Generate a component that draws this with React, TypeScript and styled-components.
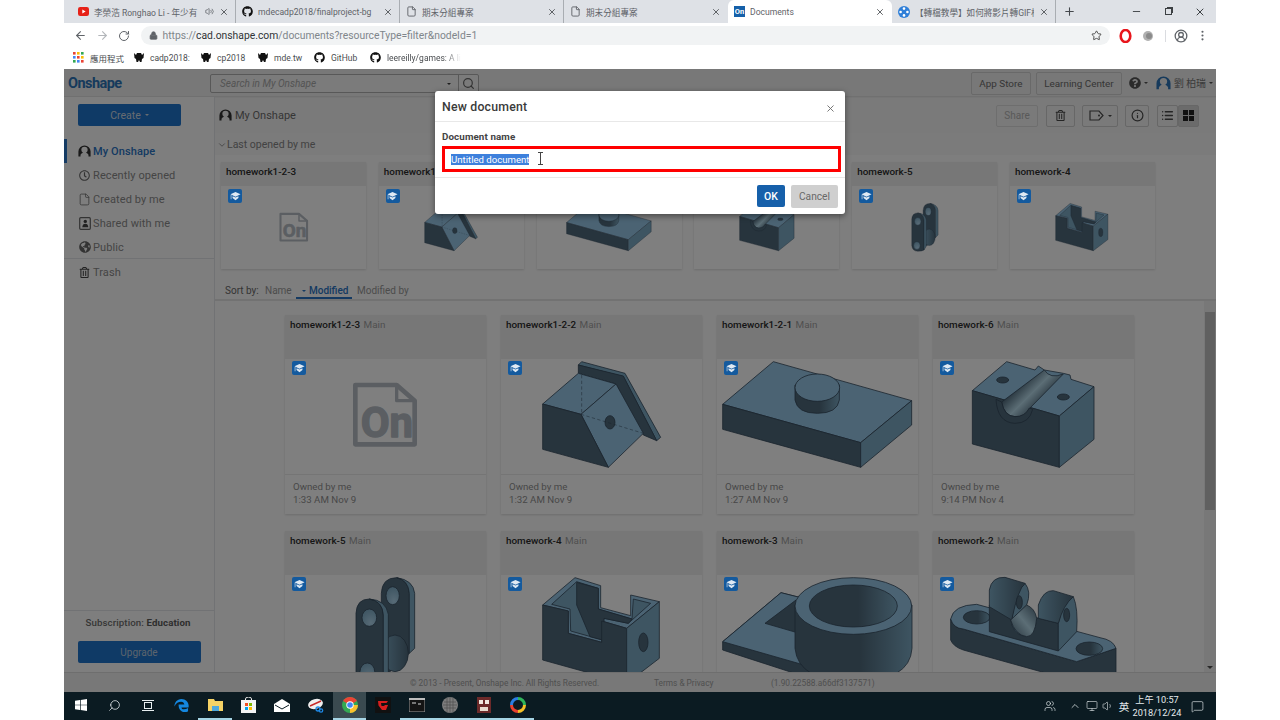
import React from "react";
import styled, { createGlobalStyle } from "styled-components";
import {
  ArrowLeft, ArrowRight, RotateCw, Lock, Star, EllipsisVertical, Plus, Minus, X, File, Search,
  Volume2, ChevronDown, List, CircleUserRound, Info, ChevronUp, Volume1, MessageSquare, Monitor, Users,
} from "lucide-react";
import { FaGithub, FaRegClock, FaGlobeAmericas, FaRegTrashAlt, FaQuestionCircle } from "react-icons/fa";

const FONT = `Roboto, "Noto Sans CJK TC", sans-serif`;
const TOP = "#96c6e6", DARK = "#4e687a", SIDE = "#7caac4", EDGE = "#34485a";

const Global = createGlobalStyle`
  html, body { margin: 0; padding: 0; background: #fff; }
  body { font-family: ${FONT}; }
  * { box-sizing: border-box; }
`;

const Root = styled.div`width: 1280px; height: 720px; display: flex; justify-content: center; background: #fff; overflow: hidden;`;
const Frame = styled.div`width: 1152px; height: 720px; display: flex; flex-direction: column;`;

/* browser chrome */
const TabStrip = styled.div`height: 23px; background: #dee1e6; display: flex; padding-left: 8px; align-items: stretch; flex: none;`;
const Tab = styled.div<{ $active?: boolean; $sep?: boolean }>`
  width: 164px; display: flex; align-items: center; gap: 5px; padding: 0 6px 0 6px; position: relative;
  background: ${(p) => (p.$active ? "#fff" : "transparent")};
  border-radius: ${(p) => (p.$active ? "6px 6px 0 0" : "0")};
  border-right: 1px solid ${(p) => (p.$sep ? "#a9adb2" : "transparent")};
  background-clip: ${(p) => (p.$sep ? "padding-box" : "border-box")};
  color: #5f6368; font-size: 8.6px;
`;
const TabTitle = styled.span`flex: 1; white-space: nowrap; overflow: hidden;`;
const FavSquare = styled.span`width: 11px; height: 11px; background: #1560a9; color: #fff; font-size: 7.5px; font-weight: 700; display: flex; align-items: center; justify-content: center; flex: none;`;
const NewTab = styled.div`width: 26px; display: flex; align-items: center; justify-content: center; color: #44484c;`;
const WindowButtons = styled.div`margin-left: auto; display: flex; align-items: center; color: #3c4043;`;
const WindowButton = styled.div`width: 32px; display: flex; justify-content: center;`;
const RestoreIcon = styled.span`width: 7px; height: 7px; border: 1px solid #3c4043; box-shadow: 1.5px -1.5px 0 -0.5px #3c4043;`;

const Toolbar = styled.div`height: 23px; background: #fff; display: flex; align-items: center; padding: 2px 0 0 6px; color: #5f6368; flex: none;`;
const NavIcon = styled.div<{ $off?: boolean }>`width: 21.5px; display: flex; justify-content: center; color: ${(p) => (p.$off ? "#b3b6ba" : "#5f6368")};`;
const Address = styled.div`margin-left: 6px; width: 969px; height: 19px; border-radius: 10px; background: #f1f3f4; display: flex; align-items: center; padding-left: 8px; color: #5f6368;`;
const Url = styled.span`font-size: 10.35px; color: #80868b; margin-left: 5px; white-space: nowrap; b { font-weight: 400; color: #303336; }`;
const StarWrap = styled.span`margin-left: auto; margin-right: 8px; display: flex;`;
const Extensions = styled.div`flex: 1; display: flex; align-items: center; position: relative;`;
const ExtSlot = styled.span<{ $w: number }>`width: ${(p) => p.$w}px; display: flex; justify-content: center;`;
const ExtDivider = styled.span`width: 1px; height: 12px; background: #dadce0; margin: 0 8px 0 11px;`;

const Bookmarks = styled.div`height: 23px; background: #fff; display: flex; align-items: center; padding-left: 9px; flex: none; font-size: 8.5px; color: #4a4d50;`;
const Bookmark = styled.div<{ $w: number }>`width: ${(p) => p.$w}px; display: flex; align-items: center; gap: 6px; white-space: nowrap; overflow: hidden;`;
const Fade = styled.span`-webkit-mask-image: linear-gradient(to right, #000 78%, transparent);`;

/* app */
const App_ = styled.div`flex: 1; min-height: 0; position: relative; display: flex; flex-direction: column; background: #fdfdfd; color: #747474;`;
const TopBar = styled.div`height: 28px; flex: none; background: #f0f0f0; border-bottom: 1px solid #e0e0e0; display: flex; align-items: center; padding: 1px 3px 0 4px;`;
const Logo = styled.div`width: 142px; color: #2d74b8; font-weight: 700; font-size: 14.5px; letter-spacing: -0.55px;`;
const SearchBox = styled.div`width: 269px; height: 19px; border: 1px solid #b0b0b0; border-radius: 2px; background: #f6f6f6; display: flex; align-items: center; font-size: 10px; color: #a8a8a8; font-style: italic; padding-left: 9px; margin-top: 1px;`;
const SearchMagnifier = styled.span`width: 20px; height: 100%; border-left: 1px solid #b0b0b0; display: flex; align-items: center; justify-content: center; color: #666; margin-left: 7px;`;
const Caret = styled.span<{ $color?: string; $size?: number }>`
  display: inline-block; width: 0; height: 0; flex: none;
  border-left: ${(p) => p.$size ?? 2.5}px solid transparent;
  border-right: ${(p) => p.$size ?? 2.5}px solid transparent;
  border-top: ${(p) => p.$size ?? 2.5}px solid ${(p) => p.$color ?? "currentColor"};
`;
const SearchSpacer = styled.span`flex: 1;`;
const TopRight = styled.div`margin-left: auto; display: flex; align-items: center; font-size: 9.9px; color: #6c6c6c;`;
const OutlineButton = styled.div<{ $w: number; $mr?: number }>`
  width: ${(p) => p.$w}px; height: 23px; margin-right: ${(p) => p.$mr ?? 0}px; border: 1px solid #d2d2d2; border-radius: 2px;
  display: flex; align-items: center; justify-content: center; gap: 5px; flex: none;
`;
const HelpSlot = styled.span`display: flex; align-items: center; gap: 3px; margin: 0 8px 0 7px; color: #555;`;
const UserName = styled.span`margin: 0 3px 0 3px; color: #777;`;

const Body = styled.div`flex: 1; min-height: 0; display: flex;`;
const Sidebar = styled.div`width: 151px; flex: none; background: #fdfdfd; border-right: 1px solid #e2e4e8; display: flex; flex-direction: column;`;
const Create = styled.div`margin: 7px 0 0 14px; width: 103px; height: 22px; background: #1e74cc; border-radius: 2px; color: #cfd8e2; font-size: 10.5px; display: flex; align-items: center; justify-content: center; gap: 4px; flex: none;`;
const Nav = styled.div`margin-top: 13px; display: flex; flex-direction: column;`;
const NavItem = styled.div<{ $active?: boolean; $h?: number }>`
  height: ${(p) => p.$h ?? 24}px; display: flex; align-items: center; gap: 2px; padding-left: ${(p) => (p.$active ? 11 : 14)}px; font-size: 11px; letter-spacing: 0.1px;
  border-left: ${(p) => (p.$active ? "3px solid #2a76c8" : "none")};
  color: ${(p) => (p.$active ? "#2a74c4" : "#8a8a8a")}; font-weight: ${(p) => (p.$active ? 500 : 400)};
`;
const NavIconBox = styled.span<{ $color?: string }>`width: 13px; display: flex; justify-content: center; color: ${(p) => p.$color ?? "#666"}; flex: none;`;
const NavDivider = styled.div`height: 1px; background: #e2e4e8; margin: -1px 0 1px;`;
const SideBottom = styled.div`margin-top: auto; border-top: 1px solid #e2e4e8; height: 62px; padding-top: 5px; display: flex; flex-direction: column; align-items: center;`;
const SubText = styled.div`font-size: 9.7px; font-weight: 500; color: #6e6e6e; height: 14px; letter-spacing: 0.1px; line-height: 14px; margin-left: -2px; b { font-weight: 700; color: #5c5c5c; }`;
const Upgrade = styled.div`margin-top: 11px; width: 123px; height: 22px; background: #1e74cc; border-radius: 2px; display: flex; align-items: center; justify-content: center; font-size: 10px; color: #b8c8da;`;

const Main = styled.div`flex: 1; min-width: 0; display: flex; flex-direction: column;`;
const MainHead = styled.div`height: 36px; flex: none; display: flex; align-items: center; padding: 0 17px 0 4px; background: #f4f4f4; font-size: 11px; border-top: 1px solid #ececec;`;
const HeadTitle = styled.span`display: flex; align-items: center; gap: 3px; color: #6c6c6c; margin-right: auto;`;
const ActionButton = styled.div<{ $w: number; $ml?: number; $light?: boolean; $sel?: boolean }>`
  width: ${(p) => p.$w}px; height: 22px; margin-left: ${(p) => p.$ml ?? 0}px; border: 1px solid ${(p) => (p.$light ? "#dcdcdc" : "#cecece")}; border-radius: 2px; font-size: 10px;
  display: flex; align-items: center; justify-content: center; gap: 4px; color: ${(p) => (p.$light ? "#b2b2b2" : "#4a4a4a")};
  background: ${(p) => (p.$sel ? "#d6d6d6" : "transparent")};
`;
const SectionHead = styled.div`height: 22px; flex: none; background: #f6f6f6; display: flex; align-items: center; padding: 1px 0 0 2px; font-size: 10.5px; color: #858585;`;
const RecentRow = styled.div`height: 127px; flex: none; display: flex; gap: 12.8px; padding: 7px 0 0 6px; background: #fcfcfc;`;
const SmallCard = styled.div`width: 145px; height: 107px; background: #fff; box-shadow: 0 1px 2px rgba(0,0,0,.14); display: flex; flex-direction: column;`;
const SmallHead = styled.div`height: 24px; background: #efefef; padding: 4px 0 0 5px; font-size: 9.9px; font-weight: 500; color: #2c2c2c; flex: none;`;
const ModelArea = styled.div`flex: 1; position: relative; display: flex; align-items: center; justify-content: center; min-height: 0;`;
const Badge = styled.span<{ $top: number }>`
  position: absolute; left: 7px; top: ${(p) => p.$top}px; width: 14px; height: 14px; background: #145a9e; border-radius: 2px;
  display: flex; align-items: center; justify-content: center; z-index: 3;
`;
const SortRow = styled.div`height: 19px; flex: none; display: flex; align-items: flex-end; padding-left: 10px; font-size: 10px; color: #8a8a8a; border-bottom: 2px solid #e4e4e4; background: #fcfcfc;`;
const SortLabel = styled.span<{ $w?: number; $strong?: boolean }>`width: ${(p) => p.$w ?? 0}px; height: 14px; white-space: nowrap; color: ${(p) => (p.$strong ? "#6a6a6a" : "#999")}; flex: none;`;
const SortActive = styled.span`width: 56px; height: 15px; color: #2a74c4; font-weight: 500; border-bottom: 2px solid #2a74c4; display: flex; align-items: center; gap: 3px; padding: 1px 0 1px 6px; margin-right: 5px; flex: none;`;

const ScrollArea = styled.div`flex: 1; min-height: 0; display: flex; overflow: hidden; background: #fcfcfc;`;
const GridWrap = styled.div`flex: 1; min-width: 0; display: flex; justify-content: center; padding-top: 14px;`;
const Grid = styled.div`display: grid; grid-template-columns: repeat(4, 201px); gap: 17px 15px; align-content: start;`;
const Card = styled.div`height: 199px; background: #fff; box-shadow: 0 1px 2px rgba(0,0,0,.14); display: flex; flex-direction: column;`;
const CardHead = styled.div`height: 44px; background: #efefef; padding: 4px 5px; font-size: 9.9px; font-weight: 500; color: #2c2c2c; white-space: nowrap; flex: none; span { font-weight: 400; color: #a0a0a0; margin-left: 1px; }`;
const CardFoot = styled.div`height: 40px; flex: none; border-top: 1px solid #eaeaea; padding: 5px 8px; font-size: 9.7px; line-height: 13px; color: #909090;`;
const Scrollbar = styled.div`width: 12px; flex: none; background: #f1f1f1; display: flex; flex-direction: column; align-items: center; padding-top: 11px; padding-bottom: 3px;`;
const Thumb = styled.div`width: 10px; height: 198px; background: #c1c1c1;`;
const ScrollEnd = styled.span`margin-top: auto; color: #505050; display: flex;`;

const Footer = styled.div`height: 20px; flex: none; background: #f0f0f0; border-top: 1px solid #dcdcdc; font-size: 8.3px; color: #a0a0a0; display: flex; align-items: center; padding-left: 346px;`;
const FootText = styled.span<{ $w: number }>`width: ${(p) => p.$w}px; white-space: nowrap; flex: none;`;

const Overlay = styled.div`position: absolute; inset: 0; background: rgba(0,0,0,.5); z-index: 2;`;
const Modal = styled.div`
  position: absolute; left: 371px; top: 22px; width: 410px; height: 123px; background: #fff; border-radius: 3px; z-index: 4;
  box-shadow: 0 2px 6px rgba(0,0,0,.45); display: flex; flex-direction: column; color: #333;
`;
const ModalHead = styled.div`height: 31px; flex: none; border-bottom: 1px solid #e8e8e8; display: flex; align-items: center; justify-content: space-between; padding: 1px 9px 0 7px; font-size: 12.3px; font-weight: 500; color: #3a3a3a; letter-spacing: 0.2px;`;
const CloseX = styled.span`display: flex; color: #6c6c6c; margin-top: 4px;`;
const ModalBody = styled.div`height: 56px; flex: none; padding: 8px 5px 0 7px; border-bottom: 1px solid #e8e8e8;`;
const FieldLabel = styled.div`font-size: 9.8px; font-weight: 700; color: #444; height: 16px; line-height: 14px; letter-spacing: 0.1px;`;
const NameField = styled.div`width: 399px; height: 26px; border: 3px solid #f00; display: flex; align-items: center; padding-left: 6px; position: relative;`;
const Selected = styled.span`background: #3d80dc; color: #fff; font-size: 9.6px; height: 11px; line-height: 11px; white-space: nowrap;`;
const IBeam = styled.svg`position: absolute; left: 92px; top: 3px;`;
const ModalFoot = styled.div`flex: 1; display: flex; justify-content: flex-end; align-items: center; gap: 6px; padding-right: 7px;`;
const OkButton = styled.div`width: 28px; height: 22px; background: #1660aa; border-radius: 2px; color: #fff; font-size: 10.5px; font-weight: 500; display: flex; align-items: center; justify-content: center;`;
const CancelButton = styled.div`width: 47px; height: 23px; background: #cfcfcf; border-radius: 2px; color: #686868; font-size: 10.2px; display: flex; align-items: center; justify-content: center;`;

/* taskbar */
const Taskbar = styled.div`height: 28px; flex: none; background: #0b1b22; display: flex; align-items: stretch; color: #e8eef0;`;
const TaskButton = styled.div<{ $running?: boolean; $focus?: boolean }>`
  width: 33.6px; display: flex; align-items: center; justify-content: center; flex: none;
  background: ${(p) => (p.$focus ? "#3a4a50" : "transparent")};
  border-bottom: 2px solid ${(p) => (p.$running ? "#a5d4e4" : "transparent")};
`;
const Tray = styled.div`margin-left: auto; display: flex; align-items: center; color: #e6ecee; padding-right: 6px;`;
const TraySlot = styled.span<{ $w: number }>`width: ${(p) => p.$w}px; display: flex; justify-content: center; align-items: center; font-size: 10.5px;`;
const Clock = styled.div`width: 50px; display: flex; flex-direction: column; align-items: center; font-size: 9.2px; line-height: 13px; margin-right: 2px;`;

/* icons */
const Arch = ({ size = 14, color = "#3a3a3a" }: { size?: number; color?: string }) => (
  <svg width={size} height={size} viewBox="0 0 16 16"><path d="M0.5 14 V8 a7.5 7.5 0 0 1 15 0 v6 h-2.6 v-2 q-1-2-3-2.6 q2-1.4 2-3.4 a3.9 3.9 0 0 0-7.8 0 q0 2 2 3.4 q-2 .6-3 2.6 v2z" fill={color} /></svg>
);
const Cap = () => (
  <svg width="11" height="11" viewBox="0 0 12 12"><path d="M6 1 L11.5 3.6 L6 6.2 L.5 3.6Z M2.8 5.6 L6 7.2 L9.2 5.6 V7.6 L6 10 L2.8 7.6Z M.8 4.4 h.7 V9 h-.7Z" fill="#dfe9f3" /></svg>
);
const TagIcon = () => (
  <svg width="15" height="11" viewBox="0 0 15 11" fill="none" stroke="#4a4a4a" strokeWidth="1.2"><path d="M1 1 H10 L14 5.5 L10 10 H1Z" /><circle cx="10" cy="5.5" r="1" fill="#4a4a4a" stroke="none" /></svg>
);
const BearIcon = () => (
  <svg width="10" height="11" viewBox="0 0 10 11"><path d="M0 1 L2 3 L3 1 L7 1 L8 3 L10 1 L9.5 6 L8 7 L7.5 10 L6 10 L5 8 L4 10 L2.5 10 L2 7 L.5 6Z" fill="#111" /></svg>
);
const AppsGrid = () => (
  <svg width="11" height="11" viewBox="0 0 11 11">
    {["#ea4335","#fbbc05","#34a853","#4285f4","#ea4335","#fbbc05","#34a853","#4285f4","#ea4335"].map((c, i) => (
      <rect key={i} x={(i % 3) * 4} y={Math.floor(i / 3) * 4} width="2.6" height="2.6" fill={c} />
    ))}
  </svg>
);
const Youtube = () => (
  <svg width="11" height="9" viewBox="0 0 11 9" style={{ flex: "none" }}><rect width="11" height="9" rx="2.2" fill="#e62117" /><path d="M4.3 2.4 L7.6 4.5 L4.3 6.6Z" fill="#fff" /></svg>
);
const Reel = () => (
  <svg width="12" height="12" viewBox="0 0 12 12" style={{ flex: "none" }}>
    <circle cx="6" cy="6" r="6" fill="#2f7fd8" />
    {[[6, 2.6], [6, 9.4], [2.6, 6], [9.4, 6]].map(([x, y], i) => <circle key={i} cx={x} cy={y} r="1.3" fill="#fff" />)}
  </svg>
);
const SharedDoc = () => (
  <svg width="12" height="13" viewBox="0 0 12 13"><rect x=".7" y=".7" width="10.6" height="11.6" rx="1" fill="none" stroke="#666" strokeWidth="1.2" /><circle cx="6.3" cy="4.4" r="1.7" fill="#444" /><path d="M3.3 10.2 q.3-3.4 3-3.4 t3 3.4z" fill="#444" /></svg>
);

type ModelKey = "doc" | "wedge" | "plate" | "block" | "clevis" | "bracket" | "ring" | "yoke";
const Grads = () => (
  <defs>
    <linearGradient id="cyl" x1="0" x2="1" y1="0" y2="0"><stop offset="0" stopColor={DARK} /><stop offset=".55" stopColor={DARK} /><stop offset="1" stopColor={SIDE} /></linearGradient>
    <linearGradient id="lug" x1="0" x2="1" y1="0" y2="0"><stop offset="0" stopColor={SIDE} /><stop offset="1" stopColor={DARK} /></linearGradient>
    <linearGradient id="grv" x1="0" x2="1" y1="1" y2="0"><stop offset="0" stopColor={DARK} /><stop offset=".5" stopColor="#b8dcec" /><stop offset="1" stopColor={DARK} /></linearGradient>
    <linearGradient id="grvb" gradientUnits="userSpaceOnUse" x1="925" y1="225" x2="990" y2="290"><stop offset="0" stopColor={DARK} /><stop offset=".5" stopColor="#b8dcec" /><stop offset="1" stopColor={DARK} /></linearGradient>
    <radialGradient id="holeg" cx=".6" cy=".8" r=".8"><stop offset="0" stopColor="#b0d6ee" /><stop offset="1" stopColor={SIDE} /></radialGradient>
  </defs>
);
const MODELS: Record<ModelKey, { vb: string; art: React.ReactNode }> = {
  doc: {
    vb: "15 147 603 345",
    art: (
      <g fill="none" stroke="#b6bdc4" strokeWidth="14" strokeLinejoin="round">
        <path d="M226 225 H350 L404 272 V403 H226Z" />
        <path d="M350 225 V272 H404" strokeWidth="10" />
        <text x="242" y="380" fontFamily="Roboto, sans-serif" fontWeight="700" fontSize="126" fill="#b6bdc4" stroke="#b6bdc4" strokeWidth="4">On</text>
      </g>
    ),
  },
  wedge: {
    vb: "663 147 603 345",
    art: (
      <>
        <polygon points="905,155 1035,190 1142,382 1130,392 1030,200 895,165" fill={SIDE} />
        <polygon points="895,165 1030,198 1130,392 1090,375 1008,222 895,190" fill={DARK} />
        <polygon points="788,282 895,190 1008,222 903,313" fill={TOP} />
        <polygon points="903,313 1008,222 1090,370 985,472" fill={TOP} />
        <polygon points="788,282 903,313 985,472 788,418" fill={DARK} />
        <ellipse cx="990" cy="337" rx="15" ry="20" fill={DARK} />
        <path d="M905 195 V313 M903 313 L1090 370" fill="none" strokeDasharray="10 7" strokeWidth="1.5" />
      </>
    ),
  },
  plate: {
    vb: "21 147 603 345",
    art: (
      <>
        <polygon points="38,283 190,155 605,272 452,398" fill={TOP} />
        <polygon points="38,283 452,398 452,472 38,358" fill={DARK} />
        <polygon points="452,398 605,272 605,345 452,472" fill={SIDE} />
        <path d="M255 225 V270 Q262 310 322 310 Q382 310 388 270 V225Z" fill="url(#cyl)" />
        <ellipse cx="322" cy="233" rx="67" ry="41" fill={TOP} />
      </>
    ),
  },
  block: {
    vb: "669 147 603 345",
    art: (
      <>
        <polygon points="787,242 890,155 975,180 985,168 1003,180 1060,190 1080,195 1083,208 1152,230 1048,318" fill={TOP} />
        <polygon points="787,242 1048,318 1048,472 787,402" fill={DARK} />
        <polygon points="1048,318 1152,230 1152,388 1048,472" fill={SIDE} />
        <path d="M875 276 L1003 180 Q1020 208 1060 192 L958 296 Q945 322 915 320 Q882 318 875 276Z" fill="url(#grvb)" />
        <path d="M858 268 Q862 338 915 340 Q958 340 968 298 L958 294 Q945 320 915 320 Q882 318 875 276Z" fill={DARK} />
        <ellipse cx="878" cy="210" rx="18" ry="9" fill={DARK} />
        <ellipse cx="1060" cy="261" rx="18" ry="9" fill={DARK} />
      </>
    ),
  },
  clevis: {
    vb: "15 150 603 345",
    art: (
      <>
        <path d="M304 205 Q306 158 350 158 Q385 165 388 205 V385 L330 440 H304Z" fill={DARK} />
        <path d="M350 158 Q400 165 404 205 V370 L388 385 V205 Q385 165 350 158Z" fill={SIDE} />
        <ellipse cx="338" cy="212" rx="20" ry="27" fill="url(#holeg)" />
        <ellipse cx="345" cy="385" rx="40" ry="55" fill="url(#lug)" />
        <path d="M228 265 Q230 222 268 222 Q308 228 310 270 V470 Q300 478 268 478 Q232 478 228 440Z" fill={DARK} />
        <path d="M268 222 Q318 225 325 268 V445 L310 470 V270 Q308 228 268 222Z" fill={SIDE} />
        <ellipse cx="268" cy="278" rx="22" ry="26" fill="url(#holeg)" />
        <ellipse cx="262" cy="440" rx="22" ry="26" fill="url(#holeg)" />
      </>
    ),
  },
  bracket: {
    vb: "663 150 603 345",
    art: (
      <>
        <polygon points="788,240 885,158 962,182 962,248 1052,272 1052,210 1138,230 1040,310 965,288 965,352 865,325 865,258" fill={TOP} />
        <polygon points="815,238 890,170 955,190 955,252 1056,282 1060,222 1112,235 1045,295 972,280 968,345 872,318 870,252" fill={SIDE} />
        <polygon points="890,172 955,190 955,252 1056,282 1045,295 972,280 968,345 930,335 890,240" fill={DARK} />
        <polygon points="788,240 865,258 865,325 965,352 965,288 1040,310 1040,475 788,405" fill={DARK} />
        <polygon points="1040,310 1138,230 1138,400 1040,475" fill={SIDE} />
        <ellipse cx="1090" cy="352" rx="14" ry="28" fill={DARK} />
      </>
    ),
  },
  ring: {
    vb: "21 150 603 345",
    art: (
      <>
        <polygon points="38,350 213,203 300,225 300,460 38,375" fill={DARK} />
        <polygon points="38,350 213,203 300,225 300,325 345,438" fill={TOP} />
        <polygon points="165,295 258,225 258,322" fill={DARK} />
        <path d="M255 240 V370 Q265 470 430 470 Q600 470 606 370 V240Z" fill="url(#cyl)" />
        <ellipse cx="430" cy="243" rx="175" ry="85" fill={TOP} />
        <ellipse cx="430" cy="243" rx="132" ry="63" fill="url(#cyl)" />
      </>
    ),
  },
  yoke: {
    vb: "669 150 603 345",
    art: (
      <>
        <path d="M722 282 V345 Q730 365 760 375 L1100 470 H1218 V370 L1100 410 L760 312 Q730 310 722 282Z" fill={DARK} />
        <path d="M800 238 Q730 240 722 282 Q730 310 760 312 L1100 410 L1218 370 Q1210 345 1170 338 Z" fill={TOP} />
        <ellipse cx="800" cy="277" rx="40" ry="20" fill="url(#cyl)" />
        <ellipse cx="1138" cy="371" rx="40" ry="20" fill="url(#cyl)" />
        <path d="M838 240 V320 L1045 378 V295 L980 278 Q975 335 945 335 Q905 325 902 280 Z" fill={DARK} />
        <path d="M945 175 Q965 200 950 240 L905 285 Q915 200 945 175Z" fill={SIDE} />
        <path d="M1090 215 Q1105 250 1100 320 L1045 378 V295 Q1055 240 1090 215Z" fill={SIDE} />
        <path d="M838 245 V195 Q845 155 885 157 L945 175 Q925 190 905 285Z" fill="url(#lug)" />
        <path d="M985 280 V240 Q1000 195 1030 197 L1090 215 Q1060 240 1045 295Z" fill="url(#lug)" />
        <path d="M902 285 Q915 330 950 335 Q975 335 980 280 Q975 250 950 240Z" fill="url(#grv)" />
        <ellipse cx="928" cy="232" rx="9" ry="20" fill={DARK} />
        <ellipse cx="1070" cy="270" rx="9" ry="20" fill={DARK} />
      </>
    ),
  },
};
const Model = ({ kind, small }: { kind: ModelKey; small?: boolean }) => (
  <svg width={small ? 90 : 201} height={small ? 52 : 115} viewBox={MODELS[kind].vb} style={{ flex: "none", overflow: "visible" }}>
    <Grads />
    <g stroke={kind === "doc" ? undefined : EDGE} strokeWidth="2.4" strokeLinejoin="round">{MODELS[kind].art}</g>
  </svg>
);

const WinLogo = () => (
  <svg width="12" height="12" viewBox="0 0 12 12" fill="#fff"><path d="M0 1.7 5 1 V5.7 H0Z M5.7 .9 12 0 V5.7 H5.7Z M0 6.3 H5 V11 L0 10.3Z M5.7 6.3 H12 V12 L5.7 11.1Z" /></svg>
);
const TaskSearch = () => <Search size={13} color="#e8eef0" style={{ transform: "scaleX(-1)" }} strokeWidth={1.4} />;
const TaskView = () => (
  <svg width="12" height="13" viewBox="0 0 12 13" fill="none" stroke="#e8eef0"><rect x="2.5" y="3.5" width="7" height="6" /><path d="M0 1.5 H12 M0 11.5 H12" /></svg>
);
const Edge = () => (
  <svg width="15" height="15" viewBox="0 0 16 16"><path d="M8 1 C3 1 .5 5 .5 9 C2 5.5 5 4 7.5 4 C10 4 11 6 11 7 H5 C4.5 11 7 15 11 15 C12.5 15 14 14.6 15 14 V10.6 C13.5 11.6 12 12 10.5 12 C9 12 8 11.3 8 10 H15.5 C16.5 5 13 1 8 1Z" fill="#1487e0" /></svg>
);
const Explorer = () => (
  <svg width="15" height="14" viewBox="0 0 15 14"><path d="M0 1 H6 L7 3 H15 V13 H0Z" fill="#f6d365" /><rect x="4" y="8" width="7" height="5" fill="#4fa8dc" /></svg>
);
const Store = () => (
  <svg width="15" height="16" viewBox="0 0 15 16"><rect y="3" width="15" height="13" fill="#f4f4f4" /><path d="M4.5 4 V2 a3 2 0 0 1 6 0 V4" fill="none" stroke="#f4f4f4" /><rect x="4" y="6" width="3" height="3" fill="#f25022" /><rect x="8" y="6" width="3" height="3" fill="#7fba00" /><rect x="4" y="10" width="3" height="3" fill="#00a4ef" /><rect x="8" y="10" width="3" height="3" fill="#ffb900" /></svg>
);
const Mail = () => (
  <svg width="16" height="13" viewBox="0 0 16 13"><path d="M0 5 L8 0 L16 5 V13 H0Z" fill="#fff" /><path d="M1 6 L8 10 L15 6" fill="none" stroke="#0b1b22" /></svg>
);
const Snip = () => (
  <svg width="16" height="15" viewBox="0 0 16 15"><ellipse cx="7.5" cy="6" rx="7.5" ry="5" fill="#f0f0f0" transform="rotate(-15 7.5 6)" /><path d="M2 8 L13 3" stroke="#c62828" strokeWidth="1.4" /><circle cx="10" cy="11" r="2" fill="none" stroke="#1e88e5" strokeWidth="1.3" /><circle cx="13" cy="12.5" r="1.7" fill="none" stroke="#1e88e5" strokeWidth="1.3" /></svg>
);
const Chrome = () => (
  <svg width="16" height="16" viewBox="0 0 16 16"><circle cx="8" cy="8" r="8" fill="#34a853" /><path d="M8 8 L1.1 4 A8 8 0 0 1 14.9 4Z" fill="#ea4335" /><path d="M8 8 H16 A8 8 0 0 1 8 16 Z" fill="#fbc02d" /><circle cx="8" cy="8" r="3.7" fill="#fff" /><circle cx="8" cy="8" r="2.8" fill="#4285f4" /></svg>
);
const Garena = () => (
  <svg width="16" height="16" viewBox="0 0 16 16"><rect width="16" height="16" fill="#111" /><path d="M3 4 H13 L11.5 6 H6 L6.5 9 H10 L9 8 H13 L11 13 H7 L3.5 8.5Z" fill="#d81e1e" /></svg>
);
const Terminal = () => (
  <svg width="16" height="14" viewBox="0 0 16 14"><rect width="16" height="14" fill="#141414" stroke="#9c9c9c" /><rect x="0" y="0" width="16" height="2" fill="#bdbdbd" /><path d="M3 5 H7 M9 6 H12" stroke="#d8d8d8" /></svg>
);
const Sphere = () => (
  <svg width="16" height="16" viewBox="0 0 16 16"><circle cx="8" cy="8" r="8" fill="#7d7d7d" /><path d="M2 5 H14 M1 8 H15 M2 11 H14 M5 1 V15 M8 0 V16 M11 1 V15" stroke="#4f4f4f" strokeWidth=".7" /></svg>
);
const Totem = () => (
  <svg width="14" height="16" viewBox="0 0 14 16"><rect width="14" height="16" fill="#6c2a2a" /><rect x="2" y="3" width="4" height="4" fill="#f0e8e0" /><rect x="8" y="3" width="4" height="4" fill="#f0e8e0" /><rect x="3" y="10" width="8" height="4" fill="#e8dcd0" /></svg>
);
const Swirl = () => (
  <svg width="16" height="16" viewBox="0 0 16 16" fill="none" strokeWidth="3"><path d="M8 1.5 A6.5 6.5 0 0 1 14.5 8" stroke="#2fb45a" /><path d="M14.5 8 A6.5 6.5 0 0 1 8 14.5" stroke="#f6c026" /><path d="M8 14.5 A6.5 6.5 0 0 1 1.5 8" stroke="#e8412f" /><path d="M1.5 8 A6.5 6.5 0 0 1 8 1.5" stroke="#2a7de1" /></svg>
);

const RECENT: { name: string; kind: ModelKey }[] = [
  { name: "homework1-2-3", kind: "doc" },
  { name: "homework1-2-2", kind: "wedge" },
  { name: "homework1-2-1", kind: "plate" },
  { name: "homework-6", kind: "block" },
  { name: "homework-5", kind: "clevis" },
  { name: "homework-4", kind: "bracket" },
];
const DOCS: { name: string; kind: ModelKey; time: string }[] = [
  { name: "homework1-2-3", kind: "doc", time: "1:33 AM Nov 9" },
  { name: "homework1-2-2", kind: "wedge", time: "1:32 AM Nov 9" },
  { name: "homework1-2-1", kind: "plate", time: "1:27 AM Nov 9" },
  { name: "homework-6", kind: "block", time: "9:14 PM Nov 4" },
  { name: "homework-5", kind: "clevis", time: "" },
  { name: "homework-4", kind: "bracket", time: "" },
  { name: "homework-3", kind: "ring", time: "" },
  { name: "homework-2", kind: "yoke", time: "" },
];

export default function App() {
  return (
    <Root>
      <Global />
      <Frame>
        <TabStrip>
          <Tab $sep><Youtube /><TabTitle>李榮浩 Ronghao Li - 年少有</TabTitle><Volume2 size={9} color="#5f6368" /><X size={10} color="#44484c" /></Tab>
          <Tab $sep><FaGithub size={11} color="#111" /><TabTitle>mdecadp2018/finalproject-bg</TabTitle><X size={10} color="#44484c" /></Tab>
          <Tab $sep><File size={11} color="#5f6368" /><TabTitle>期末分組專案</TabTitle><X size={10} color="#44484c" /></Tab>
          <Tab><File size={11} color="#5f6368" /><TabTitle>期末分組專案</TabTitle><X size={10} color="#44484c" /></Tab>
          <Tab $active><FavSquare>On</FavSquare><TabTitle>Documents</TabTitle><X size={10} color="#44484c" /></Tab>
          <Tab $sep><Reel /><TabTitle>【轉檔教學】如何將影片轉GIF格</TabTitle><X size={10} color="#44484c" /></Tab>
          <NewTab><Plus size={13} /></NewTab>
          <WindowButtons>
            <WindowButton><Minus size={11} /></WindowButton>
            <WindowButton><RestoreIcon /></WindowButton>
            <WindowButton><X size={12} /></WindowButton>
          </WindowButtons>
        </TabStrip>
        <Toolbar>
          <NavIcon><ArrowLeft size={13} /></NavIcon>
          <NavIcon $off><ArrowRight size={13} /></NavIcon>
          <NavIcon><RotateCw size={12} /></NavIcon>
          <Address>
            <Lock size={9} fill="#5f6368" />
            <Url>https://<b>cad.onshape.com</b>/documents?resourceType=filter&amp;nodeId=1</Url>
            <StarWrap><Star size={11} color="#444" /></StarWrap>
          </Address>
          <Extensions>
            <ExtSlot $w={32}><svg width="13" height="14" viewBox="0 0 13 14"><ellipse cx="6.5" cy="7" rx="4.8" ry="6" fill="none" stroke="#e8161c" strokeWidth="2.6" /></svg></ExtSlot>
            <ExtSlot $w={12}><svg width="12" height="12" viewBox="0 0 12 12"><circle cx="6" cy="6" r="5" fill="#b0b0b0" /><circle cx="7" cy="6" r="3" fill="#8a8a8a" /></svg></ExtSlot>
            <ExtDivider />
            <CircleUserRound size={14} color="#5f6368" strokeWidth={2.2} />
            <EllipsisVertical size={13} color="#5f6368" style={{ marginLeft: 8 }} />
          </Extensions>
        </Toolbar>
        <Bookmarks>
          <Bookmark $w={61}><AppsGrid /><span>應用程式</span></Bookmark>
          <Bookmark $w={67}><BearIcon /><span>cadp2018:</span></Bookmark>
          <Bookmark $w={57}><BearIcon /><span>cp2018</span></Bookmark>
          <Bookmark $w={56}><BearIcon /><span>mde.tw</span></Bookmark>
          <Bookmark $w={56}><FaGithub size={11} color="#111" /><span>GitHub</span></Bookmark>
          <Bookmark $w={100}><FaGithub size={11} color="#111" /><Fade>leereilly/games: A li</Fade></Bookmark>
        </Bookmarks>
        <App_>
          <TopBar>
            <Logo>Onshape</Logo>
            <SearchBox>
              <span>Search in My Onshape</span>
              <SearchSpacer />
              <Caret $color="#3a3a3a" />
              <SearchMagnifier><Search size={13} strokeWidth={2.2} /></SearchMagnifier>
            </SearchBox>
            <TopRight>
              <OutlineButton $w={60} $mr={5}>App Store</OutlineButton>
              <OutlineButton $w={86}>Learning Center</OutlineButton>
              <HelpSlot><FaQuestionCircle size={12} /><Caret /></HelpSlot>
              <Arch size={15} color="#2d74b8" />
              <UserName>劉 柏瑞</UserName>
              <Caret $color="#555" />
            </TopRight>
          </TopBar>
          <Body>
            <Sidebar>
              <Create>Create <Caret /></Create>
              <Nav>
                <NavItem $active><NavIconBox><Arch size={13} color="#333" /></NavIconBox>My Onshape</NavItem>
                <NavItem><NavIconBox><FaRegClock size={11} /></NavIconBox>Recently opened</NavItem>
                <NavItem><NavIconBox><File size={13} strokeWidth={1.4} /></NavIconBox>Created by me</NavItem>
                <NavItem><NavIconBox><SharedDoc /></NavIconBox>Shared with me</NavItem>
                <NavItem><NavIconBox><FaGlobeAmericas size={12} /></NavIconBox>Public</NavItem>
                <NavDivider />
                <NavItem><NavIconBox $color="#444"><FaRegTrashAlt size={11} /></NavIconBox>Trash</NavItem>
              </Nav>
              <SideBottom>
                <SubText>Subscription: <b>Education</b></SubText>
                <Upgrade>Upgrade</Upgrade>
              </SideBottom>
            </Sidebar>
            <Main>
              <MainHead>
                <HeadTitle><Arch size={13} color="#333" />My Onshape</HeadTitle>
                <ActionButton $w={42} $light>Share</ActionButton>
                <ActionButton $w={29} $ml={8}><FaRegTrashAlt size={11} /></ActionButton>
                <ActionButton $w={36} $ml={7}><TagIcon /><Caret /></ActionButton>
                <ActionButton $w={24} $ml={7}><Info size={13} strokeWidth={2.2} /></ActionButton>
                <ActionButton $w={21} $ml={8}><List size={13} strokeWidth={2.6} /></ActionButton>
                <ActionButton $w={21} $sel><svg width="11" height="11" viewBox="0 0 11 11" fill="#222"><rect width="5" height="5" /><rect x="6" width="5" height="5" /><rect y="6" width="5" height="5" /><rect x="6" y="6" width="5" height="5" /></svg></ActionButton>
              </MainHead>
              <SectionHead><ChevronDown size={10} strokeWidth={2} />Last opened by me</SectionHead>
              <RecentRow>
                {RECENT.map((r) => (
                  <SmallCard key={r.name}>
                    <SmallHead>{r.name}</SmallHead>
                    <ModelArea>
                      <Badge $top={3}><Cap /></Badge>
                      <Model kind={r.kind} small />
                    </ModelArea>
                  </SmallCard>
                ))}
              </RecentRow>
              <SortRow>
                <SortLabel $w={40} $strong>Sort by:</SortLabel>
                <SortLabel $w={31}>Name</SortLabel>
                <SortActive><Caret $size={2.5} />Modified</SortActive>
                <SortLabel $w={50}>Modified by</SortLabel>
              </SortRow>
              <ScrollArea>
                <GridWrap>
                  <Grid>
                    {DOCS.map((d) => (
                      <Card key={d.name}>
                        <CardHead>{d.name} <span>Main</span></CardHead>
                        <ModelArea>
                          <Badge $top={2}><Cap /></Badge>
                          <Model kind={d.kind} />
                        </ModelArea>
                        <CardFoot>Owned by me<br />{d.time}</CardFoot>
                      </Card>
                    ))}
                  </Grid>
                </GridWrap>
                <Scrollbar>
                  <Thumb />
                  <ScrollEnd><Caret $size={3} /></ScrollEnd>
                </Scrollbar>
              </ScrollArea>
            </Main>
          </Body>
          <Footer>
            <FootText $w={244}>© 2013 - Present, Onshape Inc. All Rights Reserved.</FootText>
            <FootText $w={117}>Terms &amp; Privacy</FootText>
            <FootText $w={120}>(1.90.22588.a66df3137571)</FootText>
          </Footer>
          <Overlay />
          <Modal>
            <ModalHead>New document<CloseX><X size={11} /></CloseX></ModalHead>
            <ModalBody>
              <FieldLabel>Document name</FieldLabel>
              <NameField>
                <Selected>Untitled document</Selected>
                <IBeam width="7" height="13" viewBox="0 0 7 13" fill="none" stroke="#444"><path d="M1 .5 H6 M3.5 .5 V12.5 M1 12.5 H6" /></IBeam>
              </NameField>
            </ModalBody>
            <ModalFoot>
              <OkButton>OK</OkButton>
              <CancelButton>Cancel</CancelButton>
            </ModalFoot>
          </Modal>
        </App_>
        <Taskbar>
          <TaskButton><WinLogo /></TaskButton>
          <TaskButton><TaskSearch /></TaskButton>
          <TaskButton><TaskView /></TaskButton>
          <TaskButton><Edge /></TaskButton>
          <TaskButton $running><Explorer /></TaskButton>
          <TaskButton><Store /></TaskButton>
          <TaskButton><Mail /></TaskButton>
          <TaskButton><Snip /></TaskButton>
          <TaskButton $running $focus><Chrome /></TaskButton>
          <TaskButton><Garena /></TaskButton>
          <TaskButton $running><Terminal /></TaskButton>
          <TaskButton $running><Sphere /></TaskButton>
          <TaskButton $running><Totem /></TaskButton>
          <TaskButton $running><Swirl /></TaskButton>
          <Tray>
            <TraySlot $w={32}><Users size={12} strokeWidth={1.3} /></TraySlot>
            <TraySlot $w={18}><ChevronUp size={12} strokeWidth={1.5} /></TraySlot>
            <TraySlot $w={16}><Monitor size={12} strokeWidth={1.2} /></TraySlot>
            <TraySlot $w={16}><Volume1 size={12} strokeWidth={1.2} /></TraySlot>
            <TraySlot $w={16}>英</TraySlot>
            <Clock><span>上午 10:57</span><span>2018/12/24</span></Clock>
            <TraySlot $w={26}><MessageSquare size={13} strokeWidth={1.2} /></TraySlot>
          </Tray>
        </Taskbar>
      </Frame>
    </Root>
  );
}
